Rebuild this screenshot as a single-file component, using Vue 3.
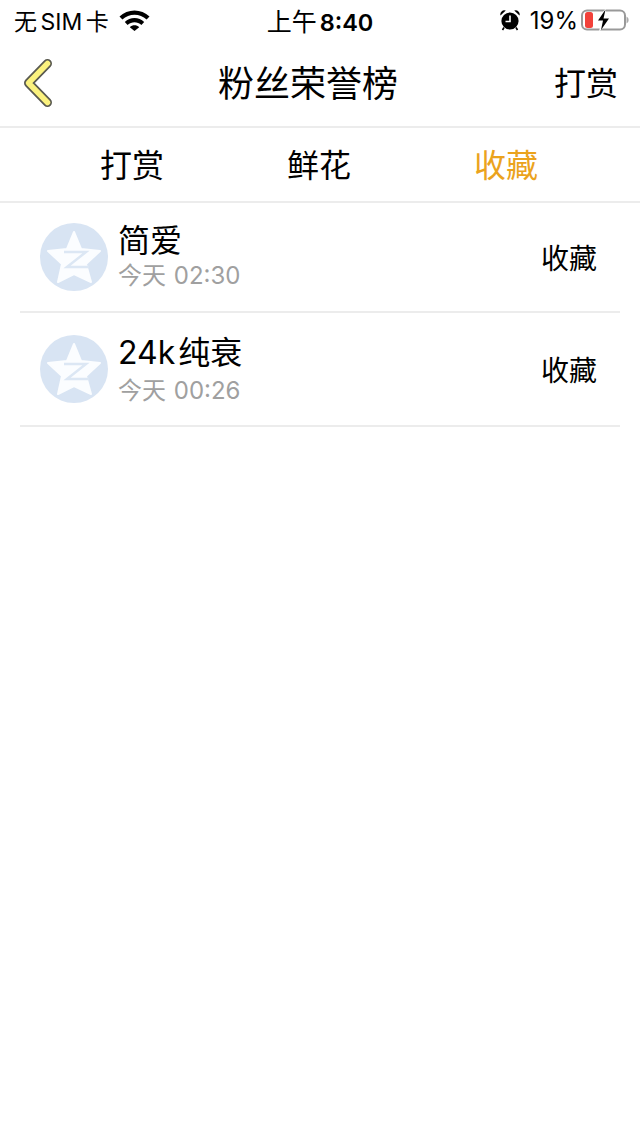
<template>
  <div class="page">
    <header class="status">
      <div class="status-left">
        <span class="carrier">无 SIM 卡</span>
        <svg class="wifi" width="31" height="22" viewBox="0 0 31 22">
          <path d="M0.5 7.5C8.5 -0.5 22.5 -0.5 30.5 7.5L27.6 10.6C21 4.2 10 4.2 3.4 10.6Z" fill="#000" />
          <path d="M5.8 13C11 7.8 20 7.8 25.2 13L22.4 16C18.4 12.4 12.6 12.4 8.6 16Z" fill="#000" />
          <path d="M10.8 18.2C13.4 15.7 17.6 15.7 20.2 18.2L15.5 22Z" fill="#000" />
        </svg>
      </div>
      <div class="clock">上午 <b>8:40</b></div>
      <div class="status-right">
        <svg class="alarm" width="22" height="22" viewBox="0 0 22 22">
          <circle cx="11" cy="12" r="8.6" fill="#000" />
          <path d="M11 6.5V12.5H6.5" fill="none" stroke="#fff" stroke-width="1.6" />
          <path d="M1.5 6.5A4 4 0 0 1 6.8 1.6ZM20.5 6.5A4 4 0 0 0 15.2 1.6Z" fill="#000" />
          <path d="M5 18.5L3.5 21M17 18.5L18.5 21" stroke="#000" stroke-width="1.6" />
        </svg>
        <span class="percent">19%</span>
        <svg class="battery" width="48" height="22" viewBox="0 0 48 22">
          <rect x="1" y="1.5" width="43" height="19" rx="5" fill="none" stroke="#999" stroke-width="2" />
          <rect x="4" y="3" width="8" height="16" rx="2.5" fill="#f2413a" />
          <path d="M45.5 7.5C47 8.2 47.6 9.5 47.6 11S47 13.8 45.5 14.5Z" fill="#aaa" />
          <path d="M25 -1L14.5 12.5H20L18 23L30 9H24Z" fill="#fff" />
          <path d="M24.5 0.5L17 11.5H22L20 21L28 9.5H22.5Z" fill="#000" />
        </svg>
      </div>
    </header>

    <nav class="nav">
      <svg class="back" width="36" height="54" viewBox="0 0 36 54">
        <path d="M29.5 9.5L10.5 29L29.5 48.5" fill="none" stroke="#5a5a50" stroke-width="9" stroke-linecap="round" stroke-linejoin="round" />
        <path d="M29.5 9.5L10.5 29L29.5 48.5" fill="none" stroke="#fbf27e" stroke-width="5.5" stroke-linecap="round" stroke-linejoin="round" />
      </svg>
      <h1 class="title">粉丝荣誉榜</h1>
      <span class="nav-action">打赏</span>
    </nav>

    <div class="tabs">
      <span v-for="tab in tabs" :key="tab" class="tab" :class="{ active: tab === current }">{{ tab }}</span>
    </div>

    <ul class="list">
      <li v-for="row in rows" :key="row.name" class="row">
        <svg class="avatar" width="68" height="68" viewBox="0 0 68 68">
          <circle cx="34" cy="34" r="34" fill="#d8e4f3" />
          <path d="M34 9L41 26L60 28L46 41L51 59L34 51L18 59L22 41L8 28L27 26Z" fill="#fbfdff" stroke="#fbfdff" stroke-width="2" stroke-linejoin="round" />
          <path d="M24 29H46L27 44H49" fill="none" stroke="#dce7f4" stroke-width="2.5" />
        </svg>
        <div class="info">
          <div class="name">{{ row.name }}</div>
          <div class="time">{{ row.time }}</div>
        </div>
        <span class="kind">收藏</span>
      </li>
    </ul>
  </div>
</template>

<script setup>
const tabs = ['打赏', '鲜花', '收藏']
const current = '收藏'
const rows = [
  { name: '简爱', time: '今天 02:30' },
  { name: '24k 纯衰', time: '今天 00:26' }
]
</script>

<style>
body {
  margin: 0;
  background: #fff;
}
</style>

<style scoped>
.page {
  width: 640px;
  height: 1136px;
  overflow: hidden;
  background: #fff;
  color: #000;
  font-family: Inter, "Noto Sans CJK SC", sans-serif;
}

.status {
  height: 40px;
  display: grid;
  grid-template-columns: 1fr auto 1fr;
  align-items: center;
  padding: 0 11px 0 14px;
  font-size: 24px;
}

.status-left {
  display: flex;
  align-items: center;
  gap: 10px;
}

.carrier {
  font-size: 23px;
  word-spacing: -3px;
}

.clock {
  font-size: 25px;
  word-spacing: -4px;
  padding-right: 3px;
}

.clock b {
  font-weight: 600;
  font-size: 23.5px;
}

.status-right {
  display: flex;
  align-items: center;
  justify-content: flex-end;
  gap: 3px;
}

.percent {
  margin-left: 6px;
}

.nav {
  height: 88px;
  display: flex;
  align-items: center;
  justify-content: space-between;
  padding: 0 22px 4px 18px;
  border-bottom: 2px solid #ececec;
  box-sizing: border-box;
}

.back {
  margin-right: 8px;
}

.title {
  margin: 0;
  font-size: 36px;
  font-weight: 400;
}

.nav-action {
  font-size: 32px;
}

.tabs {
  height: 75px;
  display: grid;
  grid-template-columns: repeat(3, 187px);
  justify-content: center;
  align-items: center;
  text-align: center;
  font-size: 32px;
  padding: 0 2px 4px 0;
  border-bottom: 2px solid #ececec;
  box-sizing: border-box;
}

.tab.active {
  color: #eba31d;
}

.list {
  list-style: none;
  margin: 0;
  padding: 0 20px;
}

.row {
  height: 110px;
  box-sizing: border-box;
  display: flex;
  align-items: center;
  padding: 0 23px 0 20px;
  border-bottom: 2px solid #ececec;
}

.row:nth-child(2) {
  height: 114px;
}

.info {
  flex: 1;
  margin: 0 0 2px 10px;
}

.row:nth-child(2) .info {
  margin-bottom: 0;
}

.row:nth-child(2) .time {
  margin-top: 3px;
}

.row:nth-child(2) .name {
  word-spacing: -6px;
}

.name {
  font-size: 32px;
  line-height: 40px;
}

.time {
  font-size: 24px;
  line-height: 30px;
  color: #a0a0a0;
  word-spacing: 1px;
}

.kind {
  font-size: 28px;
}
</style>
